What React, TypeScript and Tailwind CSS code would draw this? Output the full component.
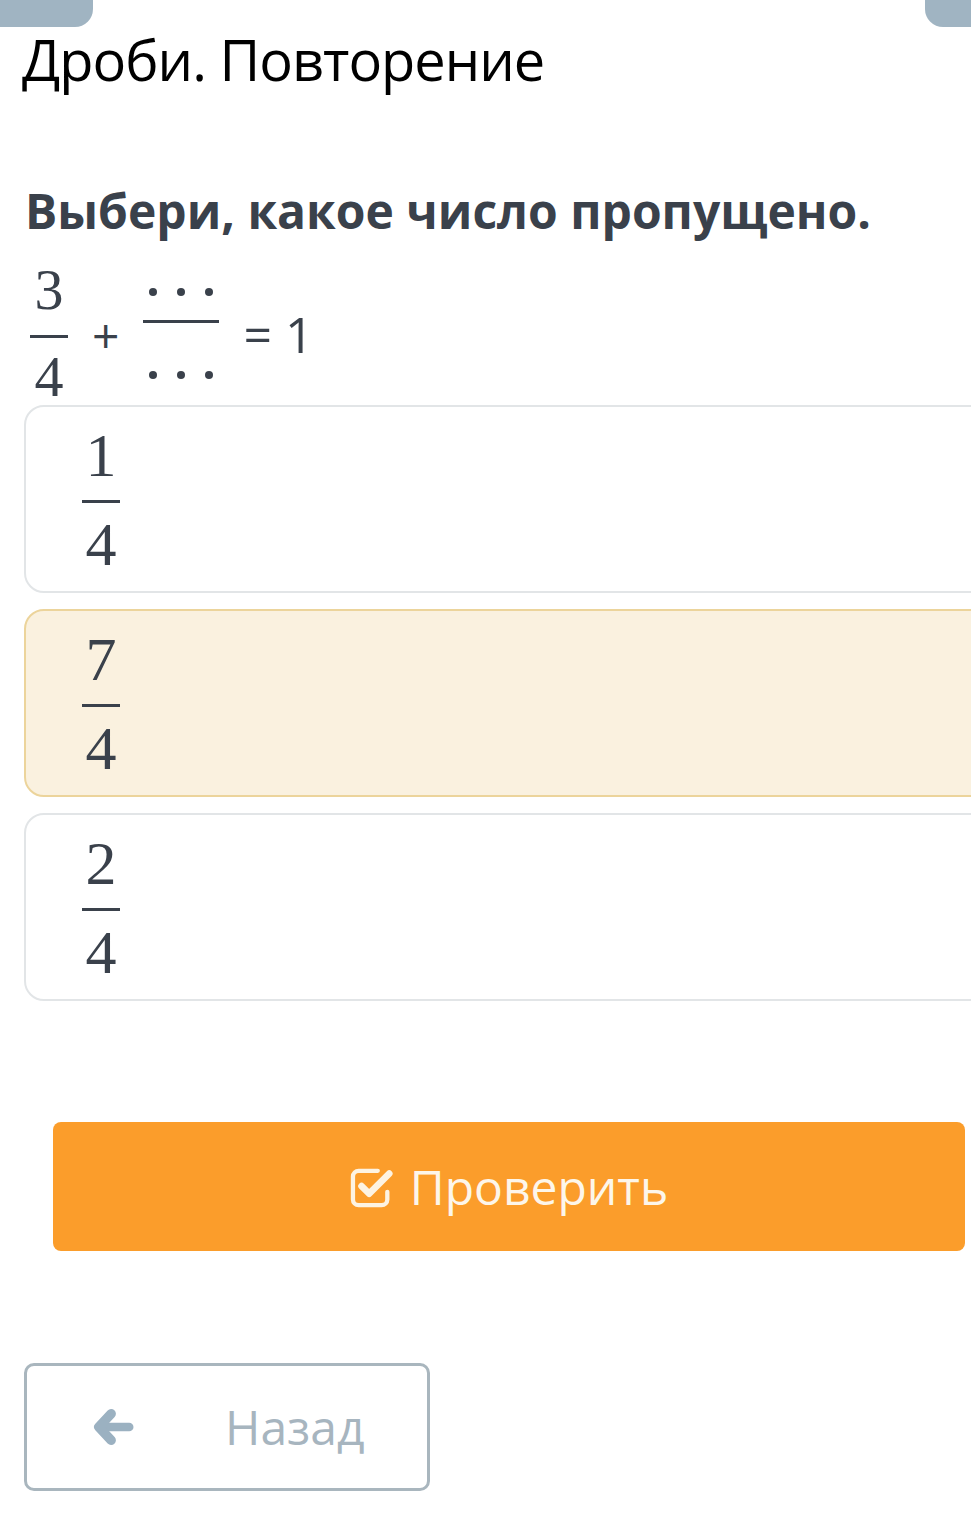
import { FC, ReactNode } from "react";

const serif = { fontFamily: '"Liberation Serif", "Times New Roman", serif' };

const Frac: FC<{ top: ReactNode; bottom: ReactNode; barW: string; size: string; gap: string }> = ({ top, bottom, barW, size, gap }) => (
  <span className={`inline-flex flex-col items-center leading-none ${size}`} style={serif}>
    <span>{top}</span>
    <span className={`block ${barW} h-[3px] bg-[#3a414b] ${gap}`} />
    <span>{bottom}</span>
  </span>
);

const Dots: FC = () => (
  <span className="flex gap-[20px] h-[12px] items-center">
    <span className="w-[8px] h-[8px] rounded-full bg-[#3a414b]" />
    <span className="w-[8px] h-[8px] rounded-full bg-[#3a414b]" />
    <span className="w-[8px] h-[8px] rounded-full bg-[#3a414b]" />
  </span>
);

const CheckSquare: FC = () => (
  <svg viewBox="0 0 48 44" className="w-[46px] h-[42px]" fill="none" stroke="#fdf3e2" strokeLinecap="round" strokeLinejoin="round">
    <path d="M29 5 H9 a6 6 0 0 0 -6 6 V35 a6 6 0 0 0 6 6 H33 a6 6 0 0 0 6 -6 V27" strokeWidth="4.5" />
    <path d="M12 21 L20 29 L41 8" strokeWidth="7" />
  </svg>
);

const ArrowLeft: FC = () => (
  <svg viewBox="0 0 44 40" className="w-[42px] h-[38px]" fill="none" stroke="#9bb1c1" strokeLinecap="round" strokeLinejoin="round">
    <path d="M38 20 H10" strokeWidth="9" />
    <path d="M19 6 L6 20 L19 34" strokeWidth="10" />
  </svg>
);

const options = [
  { n: "1", d: "4", picked: false },
  { n: "7", d: "4", picked: true },
  { n: "2", d: "4", picked: false },
];

export default function App() {
  return (
    <div className="w-[971px] min-h-[1514px] bg-white overflow-hidden text-[#3a414b]" style={{ fontFamily: '"Open Sans", "Noto Sans", sans-serif' }}>
      <div className="flex justify-between h-[27px]">
        <div className="w-[93px] h-full bg-[#a0b4c2] rounded-br-[18px]" />
        <div className="w-[46px] h-full bg-[#a0b4c2] rounded-bl-[18px]" />
      </div>

      <h1 className="pl-[22px] text-[56px] leading-[64px] text-black tracking-[-1px]">Дроби. Повторение</h1>

      <div className="pl-[25px] mt-[92px]">
        <p className="text-[48px] leading-[56px] font-bold">Выбери, какое число пропущено.</p>

        <div className="flex items-center mt-[29px] h-[130px] pl-[5px]">
          <Frac top="3" bottom="4" barW="w-[38px]" size="text-[58px]" gap="mt-[16px] mb-[10px]" />
          <span className="text-[48px] mx-[24px] leading-none mt-[4px]">+</span>
          <span className="inline-flex flex-col items-center">
            <span className="pb-[22px]"><Dots /></span>
            <span className="block w-[76px] h-[3px] bg-[#3a414b]" />
            <span className="pt-[46px]"><Dots /></span>
          </span>
          <span className="text-[50px] ml-[24px] leading-none mt-[2px]">= 1</span>
        </div>
      </div>

      <div className="flex flex-col gap-[16px] pl-[24px] mt-[7px] w-[1010px]">
        {options.map((o, i) => (
          <div
            key={i}
            className={`h-[188px] rounded-[20px] border-2 flex items-center pl-[56px] ${
              o.picked ? "bg-[#faf1df] border-[#ecd49b]" : "bg-white border-[#e2e5e7]"
            }`}
          >
            <Frac top={o.n} bottom={o.d} barW="w-[38px]" size="text-[62px]" gap="mt-[14px] mb-[10px]" />
          </div>
        ))}
      </div>

      <div className="pl-[53px] pr-[6px] mt-[121px]">
        <button className="w-full h-[129px] rounded-[8px] bg-[#fb9d2b] text-[#fdf6ea] flex items-center justify-center gap-[14px]">
          <CheckSquare />
          <span className="text-[48px]">Проверить</span>
        </button>
      </div>

      <div className="pl-[24px] mt-[112px]">
        <button className="w-[406px] h-[128px] rounded-[10px] border-[3px] border-[#a9b6be] flex items-center pl-[66px]">
          <ArrowLeft />
          <span className="text-[48px] text-[#a7b5bf] ml-[90px]">Назад</span>
        </button>
      </div>
    </div>
  );
}
